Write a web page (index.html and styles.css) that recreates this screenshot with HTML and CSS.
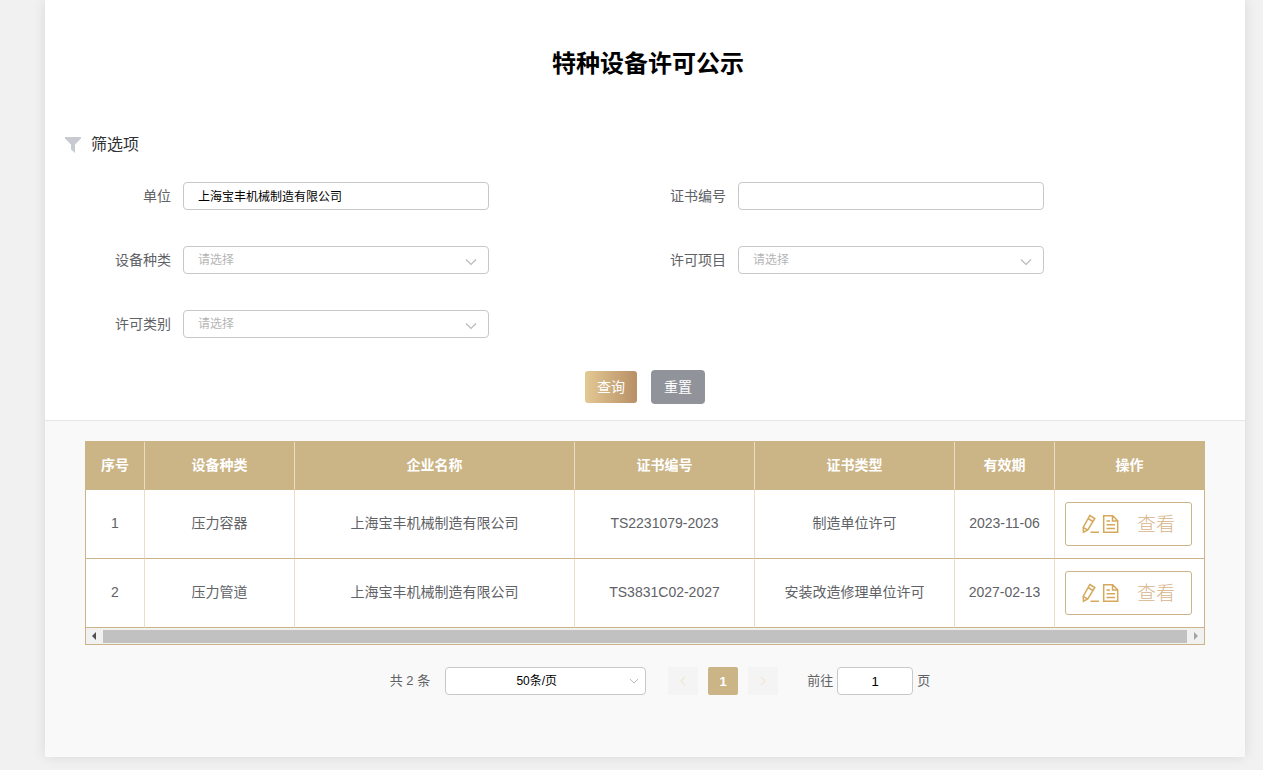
FILE: index.html
```html
<!DOCTYPE html>
<html lang="zh-CN">
<head>
<meta charset="utf-8">
<title>特种设备许可公示</title>
<link rel="stylesheet" href="styles.css">
</head>
<body>
<svg class="sprite" aria-hidden="true">
  <symbol id="chevron" viewBox="0 0 12 12"><path d="M1 3.500l5 5 5-5" fill="none" stroke="currentColor" stroke-width="1.200"/></symbol>
  <symbol id="edit" viewBox="0 0 18 20"><path d="M7.800 1.500l5 3-7 11.500-4.300 2.200-.3-4.900zM6 4.500l5 3M1.200 13.300l4.600 2.900M8.500 18.200h8.500" fill="none" stroke="currentColor" stroke-width="1.500"/></symbol>
  <symbol id="doc" viewBox="0 0 18 20"><path d="M1.700 1.700h9l5 5v11.600h-14zM10.500 1.700v5.200h5.200M4.500 7h3.500M4.500 10.800h8.500M4.500 14.500h8.500" fill="none" stroke="currentColor" stroke-width="1.500"/></symbol>
</svg>
<main class="panel">
  <h1 class="title">特种设备许可公示</h1>
  <form class="filters">
    <h2 class="filters-title">
      <svg class="funnel" viewBox="0 0 16 16" aria-hidden="true"><path d="M0 0h16v1.500L10 7.500V16L6 12.500V7.500L0 1.500z" fill="#c8cad2"/></svg>
      筛选项
    </h2>
    <div class="fields">
      <div class="field"><label for="company">单位</label><input class="control" id="company" type="text" value="上海宝丰机械制造有限公司"></div>
      <div class="field"><label for="cert">证书编号</label><input class="control" id="cert" type="text"></div>
      <div class="field"><label for="kind">设备种类</label><span class="select"><select class="control" id="kind"><option>请选择</option></select><svg class="arrow" aria-hidden="true"><use href="#chevron"/></svg></span></div>
      <div class="field"><label for="item">许可项目</label><span class="select"><select class="control" id="item"><option>请选择</option></select><svg class="arrow" aria-hidden="true"><use href="#chevron"/></svg></span></div>
      <div class="field"><label for="category">许可类别</label><span class="select"><select class="control" id="category"><option>请选择</option></select><svg class="arrow" aria-hidden="true"><use href="#chevron"/></svg></span></div>
    </div>
    <div class="actions">
      <button class="btn btn-search" type="button">查询</button>
      <button class="btn btn-reset" type="reset">重置</button>
    </div>
  </form>
  <section class="results">
    <div class="table-box">
      <table class="table">
        <colgroup><col class="c-no"><col class="c-kind"><col class="c-company"><col class="c-cert"><col class="c-type"><col class="c-date"><col class="c-op"></colgroup>
        <thead>
          <tr><th>序号</th><th>设备种类</th><th>企业名称</th><th>证书编号</th><th>证书类型</th><th>有效期</th><th>操作</th></tr>
        </thead>
        <tbody>
          <tr><td>1</td><td>压力容器</td><td>上海宝丰机械制造有限公司</td><td>TS2231079-2023</td><td>制造单位许可</td><td>2023-11-06</td><td class="op"><button class="view" type="button"><svg aria-hidden="true"><use href="#edit"/></svg><svg aria-hidden="true"><use href="#doc"/></svg><span>查看</span></button></td></tr>
          <tr><td>2</td><td>压力管道</td><td>上海宝丰机械制造有限公司</td><td>TS3831C02-2027</td><td>安装改造修理单位许可</td><td>2027-02-13</td><td class="op"><button class="view" type="button"><svg aria-hidden="true"><use href="#edit"/></svg><svg aria-hidden="true"><use href="#doc"/></svg><span>查看</span></button></td></tr>
        </tbody>
      </table>
      <div class="scrollbar" aria-hidden="true">
        <svg class="scroll-arrow" viewBox="0 0 17 16"><path d="M10 4v8L6 8z" fill="#505050"/></svg>
        <div class="thumb"></div>
        <svg class="scroll-arrow" viewBox="0 0 17 16"><path d="M7 4v8l4-4z" fill="#a3a3a3"/></svg>
      </div>
    </div>
    <nav class="pager" aria-label="分页">
      <span class="total">共 2 条</span>
      <span class="select size"><select class="control" aria-label="每页条数"><option>50条/页</option></select><svg class="arrow" aria-hidden="true"><use href="#chevron"/></svg></span>
      <div class="pages">
        <button class="page" type="button" aria-label="上一页" disabled><svg viewBox="0 0 12 12"><path d="M8 2L4 6l4 4" fill="none" stroke="currentColor" stroke-width="1.500"/></svg></button>
        <button class="page current" type="button">1</button>
        <button class="page" type="button" aria-label="下一页" disabled><svg viewBox="0 0 12 12"><path d="M4 2l4 4-4 4" fill="none" stroke="currentColor" stroke-width="1.500"/></svg></button>
      </div>
      <div class="jump"><label for="goto">前往</label><input class="control" id="goto" type="text" value="1"><span>页</span></div>
    </nav>
  </section>
</main>
</body>
</html>
```

FILE: styles.css
```css
* { box-sizing: border-box; }
body {
  margin: 0;
  padding: 0 18px 13px 45px;
  background: #f1f1f1;
  color: #606266;
  font: 14px/20px "Liberation Sans", "Noto Sans CJK SC", sans-serif;
}
button, input, select { font-family: inherit; margin: 0; }
.sprite { display: none; }
.panel {
  max-width: 1200px;
  background: #fff;
  box-shadow: 0 0 12px rgba(0, 0, 0, 0.1);
}
.title {
  margin: 0;
  padding: 48px 0 0 6px;
  color: #000;
  font-size: 24px;
  line-height: 32px;
  text-align: center;
}
.filters {
  padding: 53px 20px 16px;
  border-bottom: 1px solid #e6e6e6;
}
.filters-title {
  display: flex;
  align-items: center;
  gap: 10px;
  margin: 0 0 25px;
  color: #303133;
  font-size: 16px;
  line-height: 24px;
  font-weight: 400;
}
.funnel { width: 16px; height: 16px; }
.fields {
  display: grid;
  grid-template-columns: 1fr 1fr;
  gap: 36px 0;
  padding-right: 50px;
}
.field { display: flex; align-items: center; gap: 12px; }
.field label { width: 106px; text-align: right; }
.control {
  width: 306px;
  height: 28px;
  padding: 0 14px;
  border: 1px solid #c8c8c8;
  border-radius: 4px;
  background: #fff;
  color: #000;
  font-size: 12px;
  appearance: none;
}
input.control { padding-bottom: 2px; }
.select { position: relative; display: flex; }
.select .control { color: #b5b5b5; }
.arrow {
  position: absolute;
  right: 12px;
  top: 10px;
  width: 12px;
  height: 12px;
  color: #bdb8b8;
  pointer-events: none;
}
.actions {
  display: flex;
  align-items: center;
  justify-content: center;
  gap: 14px;
  padding-top: 32px;
}
.btn {
  padding: 0 0 2px;
  border: 0;
  border-radius: 4px;
  color: #fff;
  font-size: 14px;
}
.btn-search {
  width: 52px;
  height: 32px;
  border-radius: 3px;
  background: linear-gradient(to right, #e3c993, #b88f66);
}
.btn-reset { width: 54px; height: 34px; background: #909399; }
.results { padding: 20px 40px 62px; background: #f9f9f9; }
.table-box { border: 1px solid #cbb486; background: #fff; }
.table {
  width: 100%;
  table-layout: fixed;
  border-collapse: separate;
  border-spacing: 0;
}
.c-no { width: 59px; }
.c-kind { width: 150px; }
.c-company { width: 280px; }
.c-cert { width: 180px; }
.c-type { width: 200px; }
.c-date { width: 100px; }
.c-op { width: 149px; }
.table th, .table td {
  padding: 0 0 2px;
  border-right: 1px solid #ebdcc5;
  border-bottom: 1px solid #cbb486;
  text-align: center;
}
.table th {
  height: 48px;
  background: #cbb486;
  color: #fff;
  font-weight: 700;
}
.table td { height: 69px; }
.table th:last-child, .table td:last-child { border-right: 0; }
.table .op { padding: 0 2px 0 0; }
.view {
  display: inline-flex;
  align-items: center;
  width: 127px;
  height: 44px;
  padding: 0 0 0 16px;
  border: 1px solid #cbb486;
  border-radius: 3px;
  background: #fff;
  color: #d6a85c;
  font-size: 19px;
  font-weight: 300;
  vertical-align: middle;
}
.view svg { width: 18px; height: 20px; margin-right: 2px; }
.view span { margin-left: 15px; padding-bottom: 4px; color: #d9b48a; }
.scrollbar {
  display: flex;
  align-items: center;
  height: 16px;
  background: #f1f1f1;
}
.scroll-arrow { width: 17px; height: 16px; }
.thumb { flex: 1; height: 13px; background: #c1c1c1; }
.pager {
  display: flex;
  align-items: center;
  justify-content: center;
  padding: 22px 0 0 30px;
}
.total { margin-right: 15px; font-size: 13px; }
.size { margin-right: 22px; }
.size .control { width: 201px; padding: 0 32px 0 14px; color: #000; text-align: center; text-align-last: center; }
.size .arrow { right: 7px; top: 9px; width: 10px; height: 10px; }
.pages { display: flex; gap: 10px; margin-right: 29px; }
.page {
  display: flex;
  align-items: center;
  justify-content: center;
  width: 30px;
  height: 28px;
  padding: 0;
  border: 0;
  border-radius: 2px;
  background: #f4f4f4;
  color: #f2e8d5;
  font-size: 13px;
  font-weight: 700;
}
.page.current { background: #cbb486; color: #fff; }
.page svg { width: 12px; height: 12px; }
.jump { display: flex; align-items: center; gap: 4px; font-size: 13px; }
.jump .control { width: 76px; padding-bottom: 0; font-size: 13px; text-align: center; }
```
